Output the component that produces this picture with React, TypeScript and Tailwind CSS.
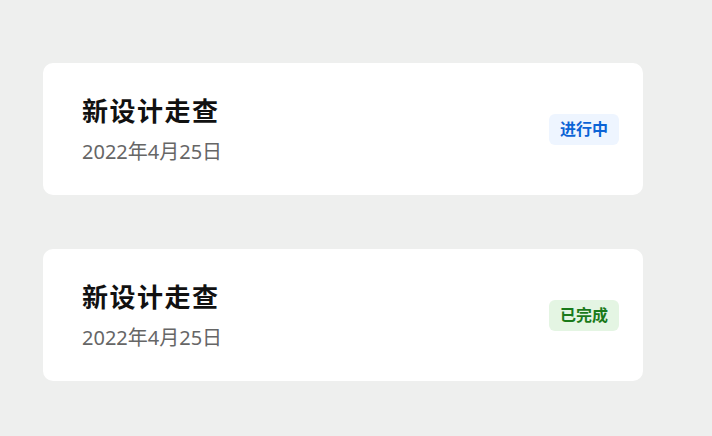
const tasks = [
  { title: "新设计走查", date: "2022年4月25日", status: "进行中", tone: "blue" },
  { title: "新设计走查", date: "2022年4月25日", status: "已完成", tone: "green" },
];

export default function App() {
  return (
    <div
      className="w-[712px] h-[436px] bg-[#eeefee] pt-[63px] pl-[43px] flex flex-col gap-[54px]"
      style={{ fontFamily: '"Noto Sans", "Noto Sans CJK SC", sans-serif' }}
    >
      {tasks.map((t, i) => (
        <div
          key={i}
          className="w-[600px] h-[132px] bg-white rounded-[10px] pl-[39px] pr-[24px] flex items-center justify-between"
        >
          <div className="flex flex-col pt-[2px]">
            <p className="text-[26px] leading-[32px] font-bold text-[#111] tracking-[1.5px]">
              {t.title}
            </p>
            <p className="text-[20px] leading-[26px] text-[#666] mt-[12px]">{t.date}</p>
          </div>
          <span
            className={`w-[70px] h-[31px] rounded-[6px] flex items-center justify-center text-[16px] font-bold ${
              t.tone === "blue"
                ? "bg-[#eef5ff] text-[#0b63d6]"
                : "bg-[#e4f5e3] text-[#1a7a1a]"
            }`}
          >
            {t.status}
          </span>
        </div>
      ))}
    </div>
  );
}
